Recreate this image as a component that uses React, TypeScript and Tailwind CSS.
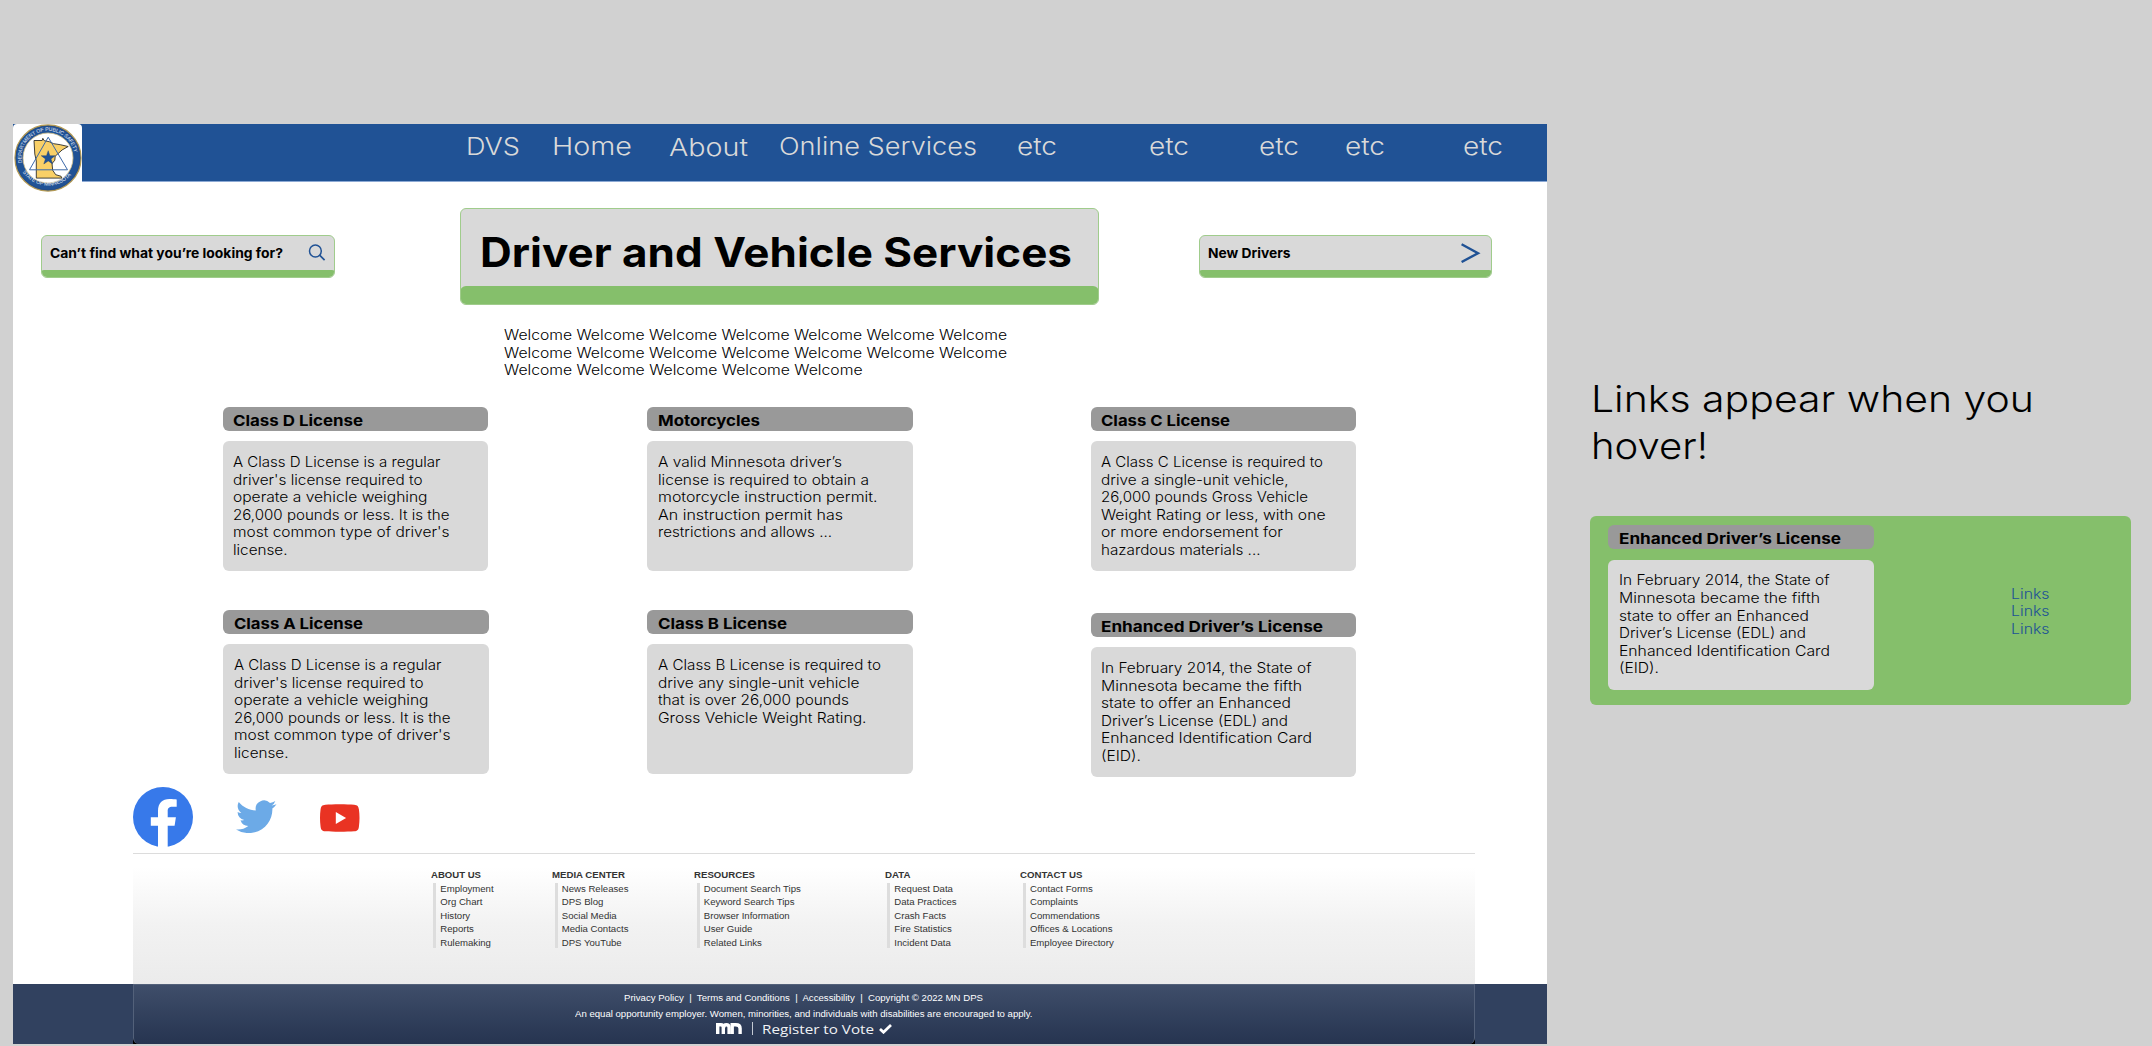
import { useLayoutEffect, useRef, useState } from "react";

/** One line of text, stretched horizontally to a fixed measure. */
function Fit({ w, children, className = "" }: { w: number; children: string; className?: string }) {
  const ref = useRef<HTMLSpanElement>(null);
  const [scale, setScale] = useState(1);
  useLayoutEffect(() => {
    const el = ref.current;
    if (el && el.offsetWidth) {
      const range = document.createRange();
      range.selectNodeContents(el);
      const natural = range.getBoundingClientRect().width / scale;
      if (Math.abs(w / natural - scale) > 0.002) setScale(w / natural);
    }
  }, [w, scale]);
  return (
    <span className={`block shrink-0 ${className}`} style={{ width: w }}>
      <span ref={ref} className="block w-max origin-left whitespace-pre" style={{ transform: `scaleX(${scale})` }}>
        {children}
      </span>
    </span>
  );
}

type Line = [string, number];
type CardData = { title: Line; lines: Line[] };

const NAV: { label: string; w: number; cls: string }[] = [
  { label: "DVS", w: 54, cls: "ml-[452.5px]" },
  { label: "Home", w: 80, cls: "ml-[32px]" },
  { label: "About", w: 79, cls: "ml-[37.5px] mt-px" },
  { label: "Online Services", w: 198, cls: "ml-[31px]" },
  { label: "etc", w: 40, cls: "ml-[39.5px]" },
  { label: "etc", w: 40, cls: "ml-[92px]" },
  { label: "etc", w: 40, cls: "ml-[70px]" },
  { label: "etc", w: 40, cls: "ml-[46px]" },
  { label: "etc", w: 40, cls: "ml-[78.5px]" },
];

const REGULAR: Line[] = [
  ["A Class D License is a regular", 207.5],
  ["driver's license required to", 189.5],
  ["operate a vehicle weighing", 194.5],
  ["26,000 pounds or less. It is the", 216.5],
  ["most common type of driver's", 216.5],
  ["license.", 54.5],
];

const ENHANCED: CardData = {
  title: ["Enhanced Driver’s License", 222],
  lines: [
    ["In February 2014, the State of", 210.5],
    ["Minnesota became the fifth", 201],
    ["state to offer an Enhanced", 190],
    ["Driver’s License (EDL) and", 187],
    ["Enhanced Identification Card", 211],
    ["(EID).", 40],
  ],
};

const CLASS_D: CardData = { title: ["Class D License", 130], lines: REGULAR };
const CLASS_A: CardData = { title: ["Class A License", 129], lines: REGULAR };
const MOTORCYCLES: CardData = {
  title: ["Motorcycles", 102],
  lines: [
    ["A valid Minnesota driver’s", 184],
    ["license is required to obtain a", 211],
    ["motorcycle instruction permit.", 219.5],
    ["An instruction permit has", 185],
    ["restrictions and allows ...", 174],
  ],
};
const CLASS_B: CardData = {
  title: ["Class B License", 129],
  lines: [
    ["A Class B License is required to", 223],
    ["drive any single-unit vehicle", 201.5],
    ["that is over 26,000 pounds", 191],
    ["Gross Vehicle Weight Rating.", 208.5],
  ],
};
const CLASS_C: CardData = {
  title: ["Class C License", 129],
  lines: [
    ["A Class C License is required to", 222],
    ["drive a single-unit vehicle,", 187.5],
    ["26,000 pounds Gross Vehicle", 207],
    ["Weight Rating or less, with one", 224.5],
    ["or more endorsement for", 182],
    ["hazardous materials ...", 159.5],
  ],
};

function Card({ data, className = "" }: { data: CardData; className?: string }) {
  return (
    <article className={`w-[265.3px] shrink-0 ${className}`}>
      <h2 className="h-[24.3px] rounded-[6px] bg-[#999999] pt-[2px] pl-[10.5px] text-[15px] leading-[24px] font-bold">
        <Fit w={data.title[1]}>{data.title[0]}</Fit>
      </h2>
      <div className="mt-[10.6px] h-[129.8px] rounded-[6px] bg-[#d9d9d9] pt-[11.6px] pl-[10.6px] text-[14px] leading-[17.55px] font-[350]">
        {data.lines.map(([t, w]) => (
          <Fit key={t} w={w}>{t}</Fit>
        ))}
      </div>
    </article>
  );
}

function Seal() {
  return (
    <svg viewBox="0 0 68 68" className="size-[68px]">
      <defs>
        <path id="arcTop" d="M 8.2 40 A 26.6 26.6 0 1 1 59.8 40" />
        <path id="arcBottom" d="M 4.2 38 A 30.6 30.6 0 0 0 63.8 38" />
      </defs>
      <circle cx="34" cy="34" r="33" fill="#205295" stroke="#b39a55" strokeWidth="1.3" />
      <circle cx="34" cy="34" r="32" fill="none" stroke="#27477a" strokeWidth="0.6" />
      <circle cx="34" cy="34" r="25" fill="#fff" stroke="#d8c48a" strokeWidth="0.8" />
      <path
        d="M20 16.5h8.2l.6-2.2 1.4 2.4 5 1 4.5 2 6.5 1 8 1.8-6 3.4-7 6.3-.4 4-2.8 3.4.7 6.6 3 4.5 5.4 1.6.8 1.8H22.300V37l-1.500-7z"
        fill="#f9d067"
        stroke="#2f2f2a"
        strokeWidth="0.9"
      />
      <path d="M34.2 13.2 53.5 45.8H15.5z" fill="none" stroke="#3b68a8" strokeWidth="1" />
      <path
        d="m34.2 26.7 1.7 5h5.3l-4.2 3.2 1.6 5.1-4.4-3.1-4.4 3.1 1.6-5.1-4.2-3.2h5.3z"
        fill="#205295"
        stroke="#1b3c6e"
        strokeWidth="0.4"
      />
      <text fill="#e4ebf5" className="font-['Liberation_Sans'] text-[5.2px]">
        <textPath href="#arcTop" textLength="84" startOffset="1">DEPARTMENT OF PUBLIC SAFETY</textPath>
      </text>
      <text fill="#e4ebf5" className="font-['Liberation_Sans'] text-[5.2px]">
        <textPath href="#arcBottom" textLength="56" startOffset="11">STATE OF MINNESOTA</textPath>
      </text>
    </svg>
  );
}

function TopBar() {
  return (
    <header className="relative flex h-[58px] items-start border-b border-[#8ca9d4] bg-[#205295] pt-[7.5px] text-[24px] leading-[30px] font-light text-[#d9d9d9]">
      {NAV.map((n, i) => (
        <Fit key={i} w={n.w} className={n.cls}>{n.label}</Fit>
      ))}
      <div className="absolute top-0 left-0 h-[69px] w-[69px] rounded-[4px] bg-white pl-[0.5px]">
        <Seal />
      </div>
    </header>
  );
}

function Hero() {
  return (
    <section className="flex h-[123px] items-start">
      <div className="mt-[53px] ml-[28px] flex h-[42.5px] w-[293.5px] shrink-0 flex-col overflow-hidden rounded-[6px] border border-[#a0cc8c] bg-[#d9d9d9]">
        <div className="flex h-[33.5px] shrink-0 items-start pt-[6.500px] pl-[8px] text-[13px] leading-[20px] font-bold">
          <Fit w={233}>Can’t find what you’re looking for?</Fit>
          <svg viewBox="0 0 18 18" className="mt-px ml-[24.5px] size-[18px]" fill="none" stroke="#205295" strokeWidth="1.5">
            <circle cx="7.4" cy="7" r="5.9" />
            <path d="m11.6 11.2 5 5" strokeWidth="1.7" />
          </svg>
        </div>
        <div className="-mx-px h-[9px] shrink-0 rounded-[3px] bg-[#85bf6b]" />
      </div>
      <div className="mt-[26px] ml-[125.5px] flex h-[96.5px] w-[639px] shrink-0 flex-col overflow-hidden rounded-[6px] border border-[#a0cc8c] bg-[#d9d9d9]">
        <h1 className="h-[77px] shrink-0 pt-[20px] pl-[18.5px] text-[40.5px] leading-[48px] font-bold">
          <Fit w={592}>Driver and Vehicle Services</Fit>
        </h1>
        <div className="-mx-px h-[19px] shrink-0 rounded-[6px] bg-[#85bf6b]" />
      </div>
      <div className="mt-[53px] ml-[99.5px] flex h-[42.5px] w-[293.5px] shrink-0 flex-col overflow-hidden rounded-[6px] border border-[#a0cc8c] bg-[#d9d9d9]">
        <div className="flex h-[33.5px] shrink-0 items-start pt-[6.5px] pl-[8px] text-[13px] leading-[20px] font-bold">
          <Fit w={82.5}>New Drivers</Fit>
          <svg viewBox="0 0 20 20" className="mt-[0.5px] ml-[170.5px] size-[20px] shrink-0" fill="none" stroke="#205295" strokeWidth="2.4">
            <path d="M0.6 1.3 17 10.2 0.6 19" />
          </svg>
        </div>
        <div className="-mx-px h-[9px] shrink-0 rounded-[3px] bg-[#85bf6b]" />
      </div>
    </section>
  );
}

const FOOTER: { title: Line; items: string[]; cls: string }[] = [
  { title: ["ABOUT US", 50], items: ["Employment", "Org Chart", "History", "Reports", "Rulemaking"], cls: "w-[121.5px]" },
  { title: ["MEDIA CENTER", 73], items: ["News Releases", "DPS Blog", "Social Media", "Media Contacts", "DPS YouTube"], cls: "w-[142px]" },
  { title: ["RESOURCES", 61], items: ["Document Search Tips", "Keyword Search Tips", "Browser Information", "User Guide", "Related Links"], cls: "w-[190.5px]" },
  { title: ["DATA", 25.5], items: ["Request Data", "Data Practices", "Crash Facts", "Fire Statistics", "Incident Data"], cls: "w-[135.7px]" },
  { title: ["CONTACT US", 62.5], items: ["Contact Forms", "Complaints", "Commendations", "Offices & Locations", "Employee Directory"], cls: "w-[120px]" },
];

function Footer() {
  return (
    <footer className="mt-[6px] font-['Liberation_Sans',Arial,sans-serif]">
      <div className="ml-[120px] flex h-[131px] w-[1342px] border-t border-[#dcdcdc] bg-linear-to-b from-white from-10% via-[#f2f2f2] via-55% to-[#ebebeb] pt-[14.5px] pl-[297.8px] text-[9.6px] text-[#333]">
        {FOOTER.map((c) => (
          <div key={c.title[0]} className={`shrink-0 ${c.cls}`}>
            <h3 className="text-[9.8px] leading-[12px] font-bold">
              <Fit w={c.title[1]}>{c.title[0]}</Fit>
            </h3>
            <ul className="mt-[2.2px] ml-[2.3px] h-[65.3px] border-l-[3px] border-[#dddddd] pl-[4.2px] leading-[13.6px]">
              {c.items.map((t) => (
                <li key={t} className="relative -top-px whitespace-nowrap">{t}</li>
              ))}
            </ul>
          </div>
        ))}
      </div>
      <div className="flex h-[60px] bg-[#31415f]">
        <div className="ml-[120px] w-[1342px] bg-black">
          <div className="flex h-[60px] flex-col rounded-b-[6px] border-x border-t border-[#53617a] bg-linear-to-b from-[#3f4e6a] to-[#263450] text-[9.7px] leading-[12px] text-white">
            <div className="mt-[6.5px] ml-[490px]">
              <Fit w={359}>{"Privacy Policy  |  Terms and Conditions  |  Accessibility  |  Copyright © 2022 MN DPS"}</Fit>
            </div>
            <div className="mt-[4px] ml-[441px]">
              <Fit w={457.5}>An equal opportunity employer. Women, minorities, and individuals with disabilities are encouraged to apply.</Fit>
            </div>
            <div className="ml-[582px] flex items-center pt-[1px]">
              <svg viewBox="0 0 26 11" className="h-[11px] w-[26px]" fill="none" stroke="#fff" strokeWidth="3.4">
                <path d="M1.7 11V1.8h3.2q2.4 0 2.4 2.8V11M7.6 4.6q.3-2.8 2.7-2.8 2.8 0 2.8 2.8V11" />
                <path d="M16.2 11V1.8h3.6q4.300 0 4.300 3.600V11" />
              </svg>
              <div className="ml-[9.5px] h-[13px] w-px bg-[#c3c9d3]" />
              <div className="ml-[9.5px] font-['Open_Sans',sans-serif] text-[13.2px] leading-[16px] font-medium text-[#f0f2f5]">
                <Fit w={112}>Register to Vote</Fit>
              </div>
              <svg viewBox="0 0 13 10" className="ml-[4.5px] h-[10px] w-[13px]" fill="none" stroke="#fff" strokeWidth="2.7">
                <path d="m1 5 3.5 3.3L12 1" />
              </svg>
            </div>
          </div>
        </div>
      </div>
    </footer>
  );
}

function Social() {
  return (
    <div className="mt-[13px] ml-[120px] flex h-[60px] items-center">
      <svg viewBox="0 0 60 60" className="size-[60px]">
        <circle cx="30" cy="30" r="30" fill="#3779ea" />
        <path
          d="M25 60V38.8h-7.2v-8.6H25v-6c0-8 4.3-12.1 11.5-12.1 2.8 0 5.4.2 7.2.5v7.2h-4.300c-3.600 0-4.700 1.800-4.700 4.400v6h8.200l-1.300 8.600h-6.900V60z"
          fill="#fff"
        />
      </svg>
      <svg viewBox="0 0 24 20" className="mt-[-1px] ml-[43px] h-[33.5px] w-[40.5px]" preserveAspectRatio="none">
        <path
          d="M23.953 2.57a10 10 0 01-2.825.775 4.958 4.958 0 002.163-2.723c-.951.555-2.005.959-3.127 1.184a4.92 4.92 0 00-8.384 4.482C7.69 6.095 4.067 4.13 1.64 1.162a4.822 4.822 0 00-.666 2.475c0 1.71.87 3.213 2.188 4.096a4.904 4.904 0 01-2.228-.616v.06a4.923 4.923 0 003.946 4.827 4.996 4.996 0 01-2.212.085 4.936 4.936 0 004.604 3.417 9.867 9.867 0 01-6.102 2.105c-.39 0-.779-.023-1.17-.067a13.995 13.995 0 007.557 2.209c9.053 0 13.998-7.496 13.998-13.985 0-.21 0-.42-.015-.63A9.935 9.935 0 0024 2.59z"
          fill="#6caae7"
        />
      </svg>
      <svg viewBox="0 0 40 28" className="mt-px ml-[43.5px] h-[28px] w-[39.5px]">
        <path
          d="M20 0c6 0 11 .2 14.5.5C38 .8 39 2.3 39.4 5.2c.4 3 .6 5.8.6 8.8s-.2 5.8-.6 8.8c-.4 2.9-1.4 4.4-4.9 4.7-3.5.3-8.5.5-14.5.5s-11-.2-14.500-.5C2 27.2 1 25.7.6 22.800.2 19.800 0 17 0 14s.2-5.800.6-8.800C1 2.300 2 .8 5.500.5 9 .2 14 0 20 0z"
          fill="#e93323"
        />
        <path d="M16 8v12l10.400-6z" fill="#fff" />
      </svg>
    </div>
  );
}

export default function App() {
  return (
    <div className="flex h-[1046px] w-[2152px] items-start overflow-hidden bg-[#d1d1d1] font-['Inter',sans-serif] text-black">
      <main className="mt-[124px] ml-[13px] h-[920px] w-[1534px] shrink-0 bg-white">
        <TopBar />
        <Hero />
        <section className="mt-[21px] ml-[490.5px] h-[80.5px] text-[14px] leading-[17.55px] font-[350]">
          <Fit w={503}>Welcome Welcome Welcome Welcome Welcome Welcome Welcome</Fit>
          <Fit w={503}>Welcome Welcome Welcome Welcome Welcome Welcome Welcome</Fit>
          <Fit w={358.5}>Welcome Welcome Welcome Welcome Welcome</Fit>
        </section>
        <section className="flex h-[203px] items-start">
          <Card data={CLASS_D} className="ml-[209.6px]" />
          <Card data={MOTORCYCLES} className="ml-[159.4px]" />
          <Card data={CLASS_C} className="ml-[178px]" />
        </section>
        <section className="flex h-[164.5px] items-start">
          <Card data={CLASS_A} className="ml-[210.4px]" />
          <Card data={CLASS_B} className="ml-[158.6px]" />
          <Card data={ENHANCED} className="mt-[3px] ml-[178px]" />
        </section>
        <Social />
        <Footer />
      </main>
      <aside className="mt-[371px] ml-[43.3px] w-[540.5px] shrink-0">
        <div className="ml-[0.5px] h-[145px] text-[37px] leading-[47px] font-light">
          <div className="pt-[3.5px]">
            <Fit w={443}>Links appear when you</Fit>
            <Fit w={117}>hover!</Fit>
          </div>
        </div>
        <div className="flex h-[188.5px] rounded-[6px] bg-[#85bf6b] pt-[9px] pl-[18px]">
          <Card data={ENHANCED} />
          <ul className="mt-[59.6px] ml-[137px] text-[14px] leading-[17.55px] font-[350] text-[#205295]">
            {[0, 1, 2].map((i) => (
              <li key={i}>
                <Fit w={38.5}>Links</Fit>
              </li>
            ))}
          </ul>
        </div>
      </aside>
    </div>
  );
}
